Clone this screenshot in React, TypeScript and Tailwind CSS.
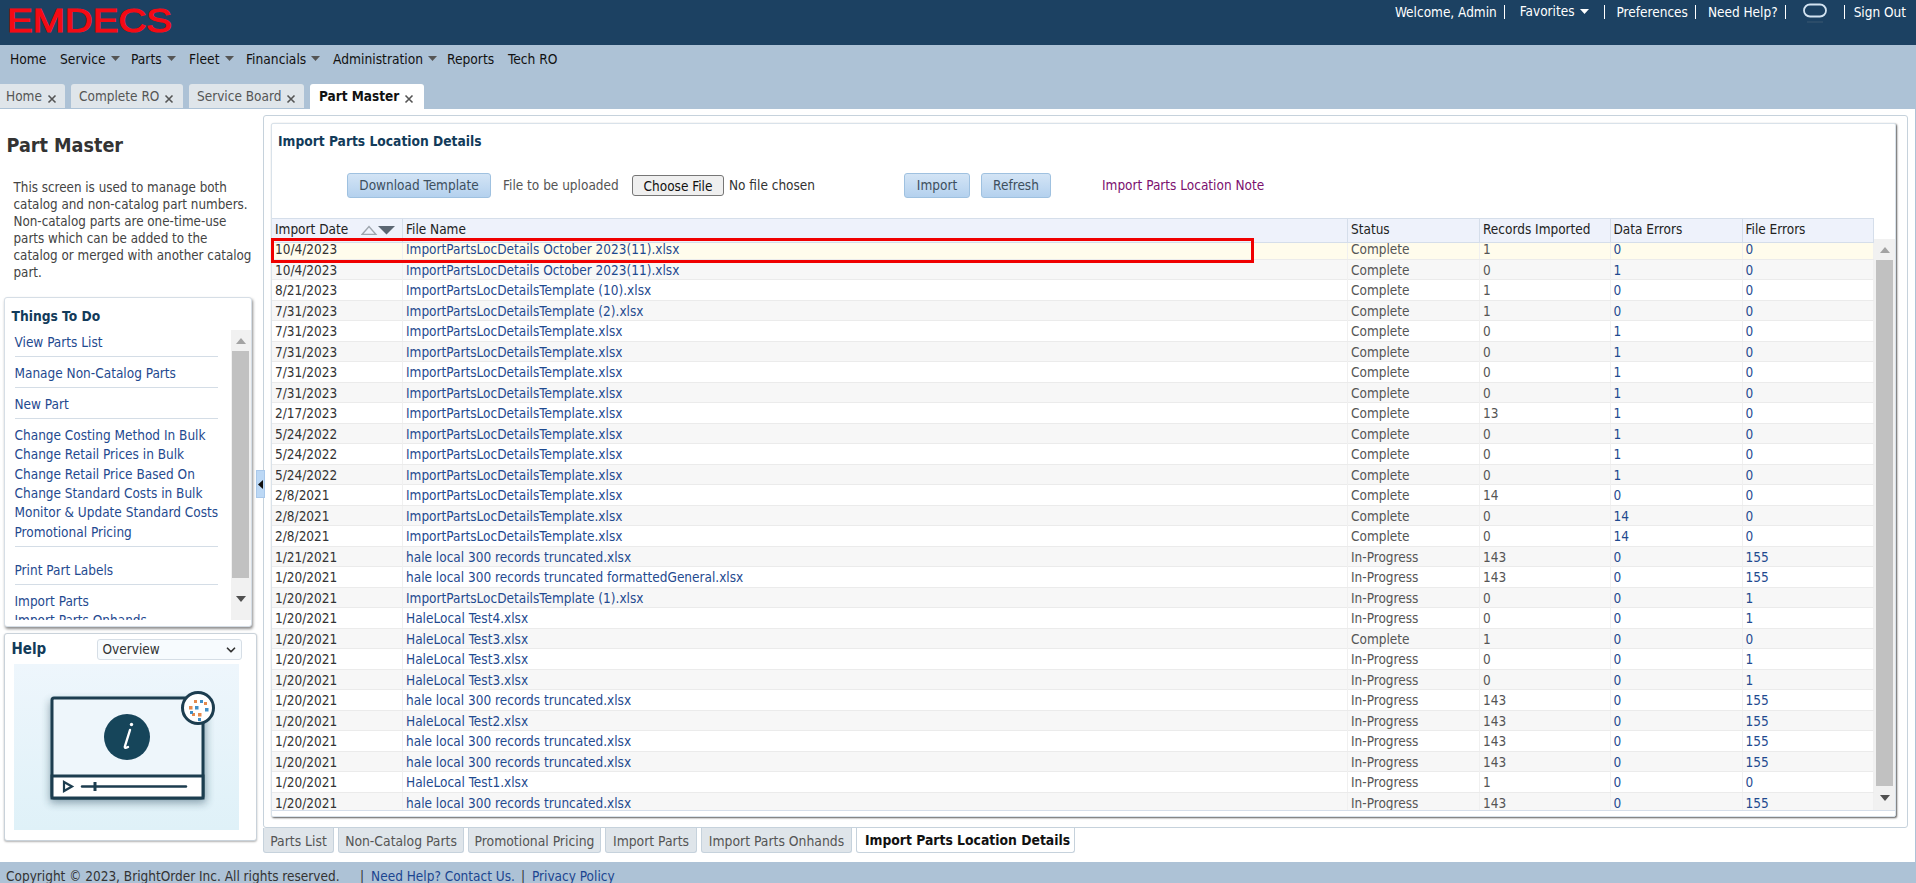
import React from 'react';
import { ChevronDown } from 'lucide-react';

const T = 'ImportPartsLocDetailsTemplate.xlsx';
const H = 'hale local 300 records truncated.xlsx';
const O = 'ImportPartsLocDetails October 2023(11).xlsx';

const rows: [string, string, string, string, string, string][] = [
  ['10/4/2023', O, 'Complete', '1', '0', '0'],
  ['10/4/2023', O, 'Complete', '0', '1', '0'],
  ['8/21/2023', 'ImportPartsLocDetailsTemplate (10).xlsx', 'Complete', '1', '0', '0'],
  ['7/31/2023', 'ImportPartsLocDetailsTemplate (2).xlsx', 'Complete', '1', '0', '0'],
  ['7/31/2023', T, 'Complete', '0', '1', '0'],
  ['7/31/2023', T, 'Complete', '0', '1', '0'],
  ['7/31/2023', T, 'Complete', '0', '1', '0'],
  ['7/31/2023', T, 'Complete', '0', '1', '0'],
  ['2/17/2023', T, 'Complete', '13', '1', '0'],
  ['5/24/2022', T, 'Complete', '0', '1', '0'],
  ['5/24/2022', T, 'Complete', '0', '1', '0'],
  ['5/24/2022', T, 'Complete', '0', '1', '0'],
  ['2/8/2021', T, 'Complete', '14', '0', '0'],
  ['2/8/2021', T, 'Complete', '0', '14', '0'],
  ['2/8/2021', T, 'Complete', '0', '14', '0'],
  ['1/21/2021', H, 'In-Progress', '143', '0', '155'],
  ['1/20/2021', 'hale local 300 records truncated formattedGeneral.xlsx', 'In-Progress', '143', '0', '155'],
  ['1/20/2021', 'ImportPartsLocDetailsTemplate (1).xlsx', 'In-Progress', '0', '0', '1'],
  ['1/20/2021', 'HaleLocal Test4.xlsx', 'In-Progress', '0', '0', '1'],
  ['1/20/2021', 'HaleLocal Test3.xlsx', 'Complete', '1', '0', '0'],
  ['1/20/2021', 'HaleLocal Test3.xlsx', 'In-Progress', '0', '0', '1'],
  ['1/20/2021', 'HaleLocal Test3.xlsx', 'In-Progress', '0', '0', '1'],
  ['1/20/2021', H, 'In-Progress', '143', '0', '155'],
  ['1/20/2021', 'HaleLocal Test2.xlsx', 'In-Progress', '143', '0', '155'],
  ['1/20/2021', H, 'In-Progress', '143', '0', '155'],
  ['1/20/2021', H, 'In-Progress', '143', '0', '155'],
  ['1/20/2021', 'HaleLocal Test1.xlsx', 'In-Progress', '1', '0', '0'],
  ['1/20/2021', H, 'In-Progress', '143', '0', '155'],
];

const navItems: [string, boolean, string][] = [
  ['Home', false, 'w-[50px]'],
  ['Service', true, 'w-[71px]'],
  ['Parts', true, 'w-[58px]'],
  ['Fleet', true, 'w-[57px]'],
  ['Financials', true, 'w-[87px]'],
  ['Administration', true, 'w-[114px]'],
  ['Reports', false, 'w-[61px]'],
  ['Tech RO', false, 'w-[60px]'],
];

const topTabs: [string, string][] = [
  ['Home', 'w-[65px]'],
  ['Complete RO', 'w-[112px]'],
  ['Service Board', 'w-[115px]'],
];

const bottomTabs: [string, string][] = [
  ['Parts List', 'w-[71px]'],
  ['Non-Catalog Parts', 'w-[126px]'],
  ['Promotional Pricing', 'w-[133px]'],
  ['Import Parts', 'w-[92px]'],
  ['Import Parts Onhands', 'w-[151px]'],
];

const todo: string[][] = [
  ['View Parts List'],
  ['Manage Non-Catalog Parts'],
  ['New Part'],
  ['Change Costing Method In Bulk', 'Change Retail Prices in Bulk', 'Change Retail Price Based On', 'Change Standard Costs in Bulk', 'Monitor & Update Standard Costs', 'Promotional Pricing'],
  ['Print Part Labels'],
  ['Import Parts', 'Import Parts Onhands'],
];

const intro = [
  'This screen is used to manage both',
  'catalog and non-catalog part numbers.',
  'Non-catalog parts are one-time-use',
  'parts which can be added to the',
  'catalog or merged with another catalog',
  'part.',
];

const columns = 'grid grid-cols-[131px_945px_132px_130.5px_132px_131.5px]';

function Close() {
  return (
    <svg width="10" height="10" viewBox="0 0 10 10" className="mt-[5px] ml-[5px] shrink-0">
      <path d="M1.5 1.5 L8.5 8.5 M8.5 1.5 L1.5 8.5" stroke="#555" strokeWidth="1.6" />
    </svg>
  );
}

function Caret({ color = '#555' }: { color?: string }) {
  return (
    <svg width="9" height="5" viewBox="0 0 9 5" className="ml-[5px] shrink-0">
      <path d="M0 0 H9 L4.5 5 Z" fill={color} />
    </svg>
  );
}

function ScrollArrow({ up }: { up?: boolean }) {
  return (
    <svg width="10" height="6" viewBox="0 0 10 6">
      <path d={up ? 'M5 0 L10 6 H0 Z' : 'M0 0 H10 L5 6 Z'} fill={up ? '#a3a3a3' : '#505050'} />
    </svg>
  );
}

function Sep() {
  return <span className="block w-px h-[14px] bg-white" />;
}

function ToolButton({ children, className }: { children: React.ReactNode; className: string }) {
  return (
    <button className={`h-[25px] shrink-0 rounded-[3px] border border-[#9fc1e0] bg-gradient-to-b from-[#d3e4f5] to-[#b4d1ee] text-[#3d4f5e] ${className}`}>
      {children}
    </button>
  );
}

function HelpVideo() {
  return (
    <svg width="225" height="166" viewBox="0 0 225 166" className="block">
      <defs>
        <linearGradient id="helpBg" x1="0" y1="0" x2="0" y2="1">
          <stop offset="0" stopColor="#eef6fc" />
          <stop offset="1" stopColor="#dff1f8" />
        </linearGradient>
        <filter id="soft" x="-20%" y="-20%" width="140%" height="140%">
          <feGaussianBlur stdDeviation="4" />
        </filter>
        <filter id="edge" x="-10%" y="-10%" width="120%" height="120%">
          <feGaussianBlur stdDeviation="0.5" />
        </filter>
      </defs>
      <rect width="225" height="166" fill="url(#helpBg)" />
      <rect x="36" y="37" width="156" height="102" fill="#1b3f52" opacity="0.45" filter="url(#soft)" />
      <g filter="url(#edge)">
        <rect x="38" y="34" width="151" height="100" rx="2" fill="#eef6fb" stroke="#1d3c4f" strokeWidth="3" />
        <rect x="38" y="112" width="151" height="22" fill="#fff" stroke="#1d3c4f" strokeWidth="3" />
        <circle cx="113" cy="73" r="23" fill="#17445a" />
        <path d="M116 66 L111 82 Q110 85 114 83" stroke="#fff" strokeWidth="2.4" fill="none" strokeLinecap="round" />
        <circle cx="117.5" cy="60.5" r="1.7" fill="#fff" />
        <path d="M50 118 L58 122.5 L50 127 Z" fill="#fff" stroke="#1d3c4f" strokeWidth="2.2" />
        <path d="M68 122.5 H172" stroke="#1d3c4f" strokeWidth="2.4" strokeLinecap="round" />
        <path d="M81 118 V127" stroke="#1d3c4f" strokeWidth="3" />
        <circle cx="184" cy="44" r="15.5" fill="#fff" stroke="#1d3c4f" strokeWidth="3" />
        <g fill="#e58a4e">
          <rect x="175" y="42" width="3.5" height="3.5" />
          <rect x="180" y="36" width="3" height="3" />
          <rect x="184" y="49" width="3.5" height="3.5" />
          <rect x="178" y="49" width="3" height="3" />
          <rect x="190" y="38" width="3" height="3" />
        </g>
        <g fill="#3f8fc7">
          <rect x="181" y="42" width="3.5" height="3.5" />
          <rect x="186" y="36" width="3" height="3" />
          <rect x="191" y="44" width="3.5" height="3.5" />
          <rect x="184" y="54" width="3" height="3" />
          <rect x="176" y="47" width="3" height="3" />
        </g>
      </g>
    </svg>
  );
}

export default function App() {
  return (
    <div className="w-[1916px] h-[883px] overflow-hidden flex flex-col bg-white font-['DejaVu_Sans_Condensed','Liberation_Sans',sans-serif] text-[13.5px] text-[#444]">
      {/* top bar */}
      <div className="h-[45px] shrink-0 bg-[#1c4162] flex items-start justify-between pl-[6px] pr-[10px] text-white">
        <svg width="170" height="40" viewBox="0 0 170 40" className="mt-[3px] overflow-visible">
          <text x="1" y="28.5" textLength="165" lengthAdjust="spacingAndGlyphs" fontFamily="'Liberation Sans', sans-serif" fontSize="34" fill="#f50a14" stroke="#f50a14" strokeWidth="1.2">EMDECS</text>
        </svg>
        <div className="flex items-center h-[24px] text-white">
          <span>Welcome, Admin</span>
          <span className="ml-[7px]"><Sep /></span>
          <span className="ml-[15px] mb-[1px] flex items-center">Favorites<Caret color="#fff" /></span>
          <span className="ml-[15px]"><Sep /></span>
          <span className="ml-[12px]">Preferences</span>
          <span className="ml-[7px]"><Sep /></span>
          <span className="ml-[12px]">Need Help?</span>
          <span className="ml-[7px]"><Sep /></span>
          <svg width="26" height="22" viewBox="0 0 26 22" className="ml-[16px]">
            <path d="M5 21 H21" stroke="#31516d" strokeWidth="1.5" />
            <rect x="2" y="3.5" width="22" height="12" rx="6" fill="none" stroke="#d3e3f1" strokeWidth="1.8" />
          </svg>
          <span className="ml-[16px]"><Sep /></span>
          <span className="ml-[9px]">Sign Out</span>
        </div>
      </div>

      {/* nav and page tabs */}
      <div className="h-[64px] shrink-0 bg-[#adc2d6] flex flex-col justify-between text-[#111]">
        <div className="flex items-center h-[28px] pl-[10px] text-[13.7px]">
          {navItems.map(([name, caret, w]) => (
            <div key={name} className={`flex items-center ${w}`}>
              {name}
              {caret && <Caret />}
            </div>
          ))}
        </div>
        <div className="flex h-[25px] gap-[6px]">
          {topTabs.map(([name, w], i) => (
            <div key={name} className={`${w} ${i === 0 ? 'pl-[6px] rounded-tr-[3px]' : 'pl-[8px] rounded-t-[3px]'} h-[24px] bg-[#dfe5ea] text-[#555] flex items-center`}>
              {name}
              <Close />
            </div>
          ))}
          <div className="w-[114px] h-[25px] pl-[9px] bg-white rounded-t-[3px] font-bold text-[#111] flex items-center">
            Part Master
            <Close />
          </div>
        </div>
      </div>

      {/* main */}
      <div className="relative flex-1 min-h-0 flex border-r border-[#adc2d6]">
        <div className="w-[263px] shrink-0 pl-[3.5px] flex flex-col">
          <h1 className="mt-[24px] ml-[3px] text-[19.6px] leading-[26px] font-bold text-[#333]">Part Master</h1>
          <p className="mt-[20px] ml-[10px] text-[13.3px] leading-[17px] whitespace-nowrap text-[#444]">
            {intro.map((l) => <span key={l} className="block">{l}</span>)}
          </p>
          {/* things to do */}
          <div className="mt-[16px] w-[248px] h-[330px] shrink-0 bg-white rounded-[3px] border border-[#d6dee6] shadow-[1px_2px_3px_rgba(0,0,0,0.45)] flex flex-col">
            <div className="h-[32px] shrink-0 pl-[7px] pt-[10px] text-[13.7px] leading-[16px] font-bold text-[#123b5a]">Things To Do</div>
            <div className="flex h-[290px]">
              <div className="w-[226px] pl-[10px] pt-[3px] overflow-hidden leading-[19.4px] text-[#1f4a8f]">
                {todo.map((group, i) => (
                  <div key={i} className={`w-[203px] pb-[4px] whitespace-nowrap ${i === 0 ? '' : i === 4 ? 'pt-[13.5px]' : 'pt-[6.5px]'} ${i === todo.length - 1 ? '' : 'border-b-[1.5px] border-[#d4dde6]'}`}>
                    {group.map((l) => <div key={l}>{l}</div>)}
                  </div>
                ))}
              </div>
              <div className="w-[20px] bg-[#f1f1f1] flex flex-col items-center">
                <div className="h-[21px] flex items-center"><ScrollArrow up /></div>
                <div className="w-[17px] h-[227px] bg-[#c1c1c1]" />
                <div className="flex-1 flex items-center"><ScrollArrow /></div>
              </div>
            </div>
          </div>
          {/* help */}
          <div className="mt-[6px] w-[253px] h-[208px] shrink-0 bg-white rounded-[3px] border border-[#c9d2da] shadow-[0_1px_2px_rgba(0,0,0,0.3)] pt-[5px]">
            <div className="flex items-center justify-between pl-[7px] pr-[14px] h-[21px]">
              <span className="text-[15px] font-bold text-[#123b5a]">Help</span>
              <div className="w-[145px] h-[21px] border border-[#d6dee6] rounded-[3px] bg-[#f7fbfe] pl-[5px] pr-[3px] flex items-center justify-between text-[#333]">
                Overview
                <ChevronDown size={14} strokeWidth={3} color="#333" />
              </div>
            </div>
            <div className="mt-[4px] ml-[9px]"><HelpVideo /></div>
          </div>
        </div>

        {/* right panel */}
        <div className="flex-1 min-w-0 flex flex-col pr-[7px]">
          <div className="mt-[6px] h-[713px] shrink-0 rounded-[3px] border border-[#c6d2dc] pl-[7px] pt-[7px] pr-[11px]">
            <div className="relative h-[694px] bg-white border border-[#d9e2ea] rounded-[2px] shadow-[1px_1px_2px_rgba(0,0,0,0.65)] flex flex-col">
              <div className="h-[94px] shrink-0 relative">
                <div className="pl-[6px] pt-[8px] text-[13.7px] leading-[18px] font-bold text-[#123b5a]">Import Parts Location Details</div>
                <div className="mt-[23px] flex items-center whitespace-nowrap">
                  <ToolButton className="ml-[75px] w-[144px]">Download Template</ToolButton>
                  <span className="ml-[12px] w-[129px] shrink-0 text-[#555]">File to be uploaded</span>
                  <button className="w-[92px] h-[21px] shrink-0 bg-[#efefef] border border-[#767676] rounded-[3px] text-[#111]">Choose File</button>
                  <span className="ml-[5px] w-[175px] shrink-0 text-[#333]">No file chosen</span>
                  <ToolButton className="w-[66px]">Import</ToolButton>
                  <ToolButton className="ml-[11px] w-[70px]">Refresh</ToolButton>
                  <span className="ml-[51px] text-[#7b0f6f]">Import Parts Location Note</span>
                </div>
              </div>
              <div className={`${columns} h-[21px] shrink-0 pr-[21px] text-[#222] relative`}>
                {['Import Date', 'File Name', 'Status', 'Records Imported', 'Data Errors', 'File Errors'].map((h, i) => (
                  <div key={h} className="relative bg-[#eef2fb] border-y border-[#d5deea] border-r pl-[3px] pb-[3px] flex items-center">
                    {h}
                    {i === 0 && (
                      <svg width="36" height="10" viewBox="0 0 36 10" className="ml-[13px] mt-[2px] shrink-0">
                        <path d="M1 9.5 L8 1.5 L15 9.5 Z" fill="none" stroke="#9ea5ad" strokeWidth="1.4" />
                        <path d="M17 1 H34 L25.5 9.5 Z" fill="#5b6672" />
                      </svg>
                    )}
                  </div>
                ))}
              </div>
              <div className="flex h-[571px] shrink-0">
                <div className="flex-1 min-w-0 overflow-hidden">
                  {rows.map((r, i) => (
                    <div key={i} className={`${columns} h-[20.5px] border-b border-[#ebebeb] ${i === 0 ? 'bg-[#fffcec]' : i % 2 === 1 ? 'bg-[#f7f7f7]' : 'bg-white'}`}>
                      {r.map((c, j) => (
                        <div key={j} className={`pl-[3px] leading-[20px] whitespace-nowrap border-r border-[#f0f0f0] ${j === 1 || j >= 4 ? 'text-[#1f4a8f]' : j === 0 ? 'text-[#333]' : 'text-[#555]'}`}>
                          {c}
                        </div>
                      ))}
                    </div>
                  ))}
                </div>
                <div className="w-[21px] shrink-0 bg-[#f1f1f1] flex flex-col items-center">
                  <div className="h-[21px] flex items-center"><ScrollArrow up /></div>
                  <div className="w-[17px] h-[526px] bg-[#c1c1c1]" />
                  <div className="flex-1 flex items-center"><ScrollArrow /></div>
                </div>
              </div>
              <div className="flex-1 border-t border-[#d5deea]" />
              {/* highlight drawn over the first row */}
              <div className="absolute left-[-1px] top-[114px] w-[983px] h-[25px] border-[3px] border-[#f00000]" />
            </div>
          </div>
          <div className="flex gap-[4px] items-start">
            {bottomTabs.map(([name, w]) => (
              <div key={name} className={`${w} h-[25px] pt-[2px] rounded-b-[3px] bg-[#dfe5ea] border border-t-0 border-[#c6d2dc] text-[13.8px] text-[#555] flex items-center justify-center`}>
                {name}
              </div>
            ))}
            <div className="w-[219px] h-[25px] pl-[4px] rounded-b-[3px] bg-white border border-t-0 border-[#c6d2dc] text-[13.8px] font-bold text-[#111] flex items-center justify-center">
              Import Parts Location Details
            </div>
          </div>
        </div>

        {/* collapse handle */}
        <div className="absolute left-[256px] top-[361px] w-[9px] h-[28px] bg-[#bcd8f5] border border-[#a9c8ea] flex items-center justify-center">
          <svg width="5" height="9" viewBox="0 0 5 9"><path d="M5 0 V9 L0 4.5 Z" fill="#111" /></svg>
        </div>
      </div>

      {/* footer */}
      <div className="h-[21px] shrink-0 bg-[#adc2d6] flex items-start pt-[6px] pl-[6px] leading-[17px] text-[#333] whitespace-nowrap">
        <span className="w-[335px]">Copyright © 2023, BrightOrder Inc. All rights reserved.</span>
        <span className="ml-[19px]">|</span>
        <span className="ml-[7px] text-[#1b4590]">Need Help? Contact Us.</span>
        <span className="ml-[6px]">|</span>
        <span className="ml-[7px] text-[#1b4590]">Privacy Policy</span>
      </div>
    </div>
  );
}
